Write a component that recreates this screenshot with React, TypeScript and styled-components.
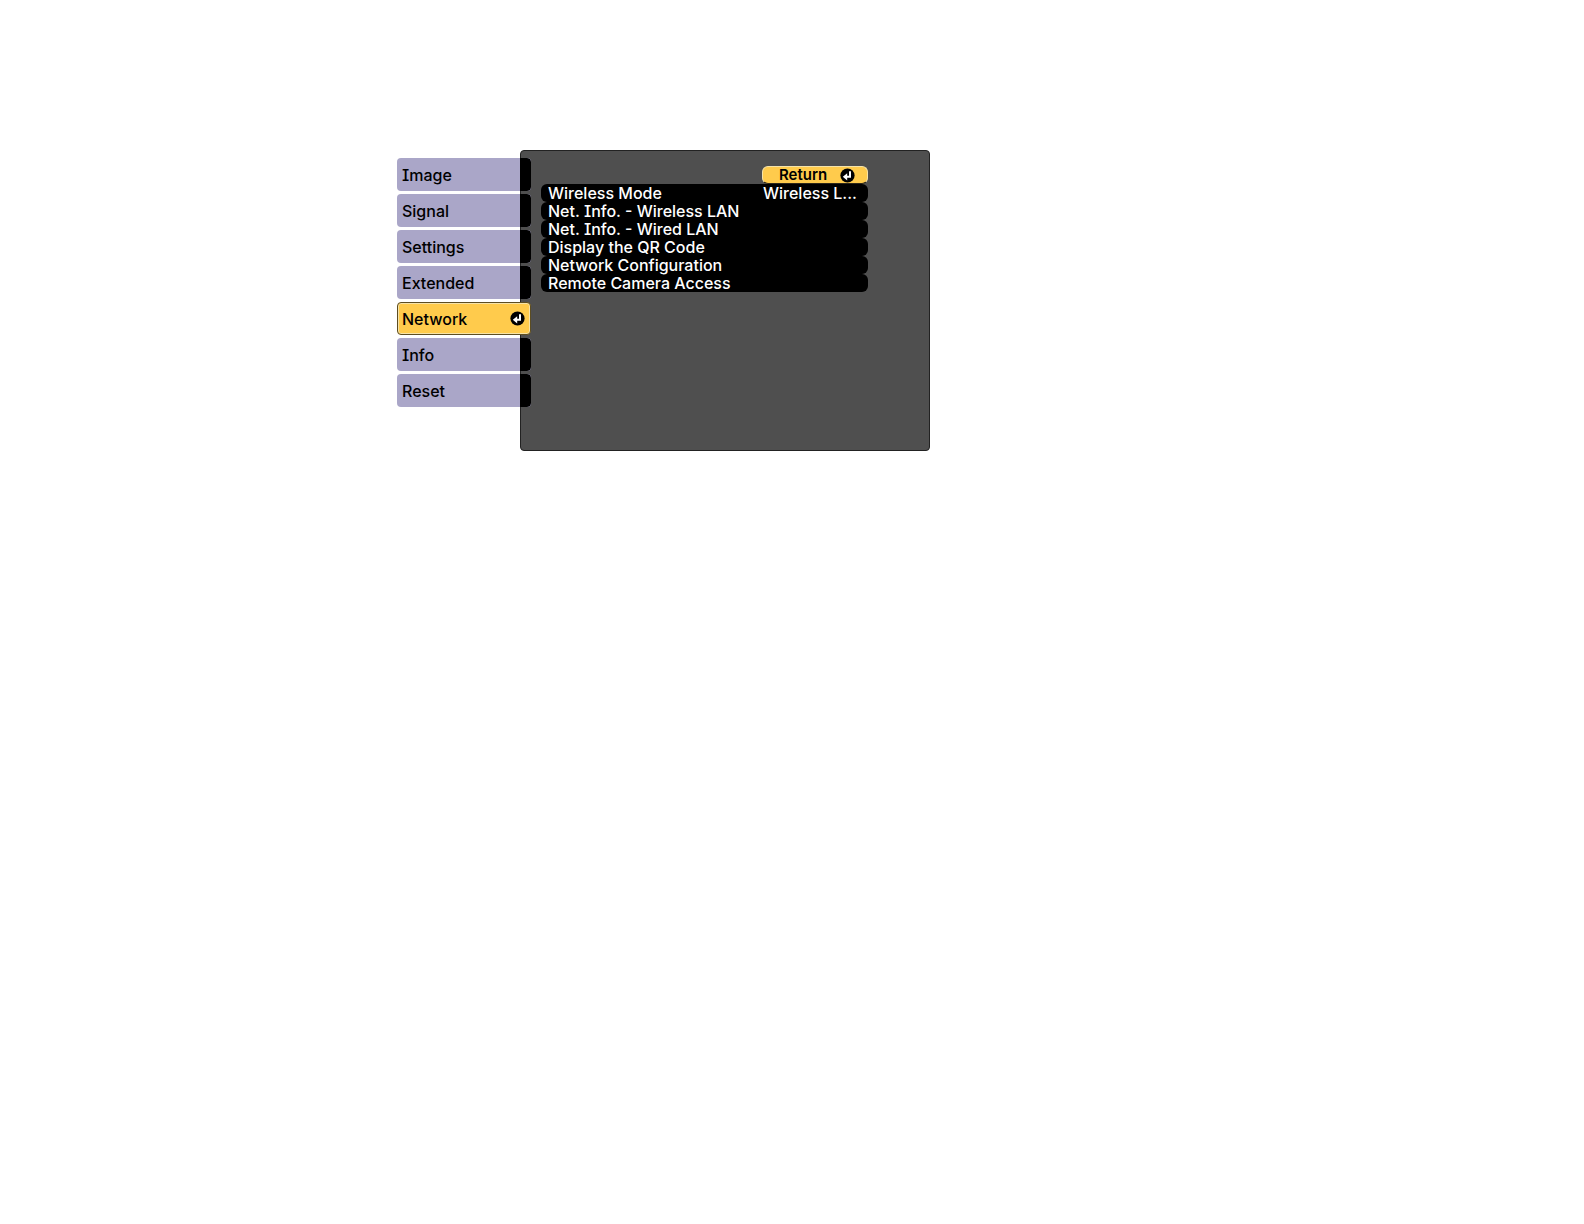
import React, { useState } from "react";
import styled, { createGlobalStyle, css } from "styled-components";

const color = {
  tab: "#aaa6c8",
  accent: "#ffcb4c",
  highlight: "#f6e3a8",
  panel: "#4f4f4f",
  ink: "#000000",
  text: "#ffffff",
};

const GlobalStyle = createGlobalStyle`
  * { box-sizing: border-box; }
  body {
    margin: 0;
    background: #ffffff;
    font-family: Inter, "Liberation Sans", sans-serif;
    font-feature-settings: "cv08";
  }
  button {
    margin: 0;
    padding: 0;
    border: 0;
    background: none;
    font: inherit;
    font-feature-settings: inherit;
    color: inherit;
    text-align: left;
    cursor: pointer;
  }
`;

const Page = styled.main`
  padding: 150px 24px 24px 397px;
`;

const Osd = styled.div`
  display: flex;
  align-items: stretch;
  max-width: 533px;
`;

const Tabs = styled.nav`
  position: relative;
  z-index: 1;
  flex: none;
  display: flex;
  flex-direction: column;
  gap: 3px;
  width: 134px;
  margin-right: -11px;
  padding: 8px 0 44px;
`;

const Tab = styled.button<{ $active: boolean }>`
  display: flex;
  align-items: center;
  justify-content: space-between;
  height: 33px;
  padding-left: 5px;
  border-radius: 4px;
  overflow: hidden;
  background: ${color.tab};
  color: ${color.ink};
  font-size: 16px;
  font-weight: 500;
  line-height: 18px;
  ${(p) =>
    p.$active &&
    css`
      padding: 0 5px 0 4px;
      border: 1px solid #5c4d22;
      box-shadow: inset 0 0 0 1px ${color.highlight};
      background: ${color.accent};
    `}
`;

const TabCap = styled.span`
  align-self: stretch;
  width: 11px;
  border-radius: 0 4px 4px 0;
  background: ${color.ink};
`;

const Panel = styled.section`
  flex: 1;
  display: flex;
  flex-direction: column;
  padding: 15px 61px 15px 20px;
  border: 1px solid #222222;
  border-radius: 4px;
  background: ${color.panel};
`;

const ReturnButton = styled.button`
  align-self: flex-end;
  display: flex;
  align-items: center;
  justify-content: space-between;
  width: 106px;
  height: 18px;
  padding: 0 12px 0 16px;
  border: 1px solid ${color.highlight};
  border-bottom-color: #2c2618;
  border-radius: 6px;
  background: ${color.accent};
  color: ${color.ink};
  font-size: 15px;
  font-weight: 600;
  line-height: 16px;
`;

const MenuList = styled.ul`
  margin: 0;
  padding: 0;
  list-style: none;
`;

const MenuItem = styled.button`
  display: flex;
  width: 100%;
  height: 18px;
  padding-left: 7px;
  border-radius: 6px;
  background: ${color.ink};
  color: ${color.text};
  font-size: 16px;
  font-weight: 500;
  line-height: 18px;
  white-space: nowrap;
`;

const ItemName = styled.span`
  flex: 1;
`;

const ItemValue = styled.span`
  width: 105px;
`;

const EnterSvg = styled.svg`
  flex: none;
  width: 15px;
  height: 15px;
`;

function EnterIcon() {
  return (
    <EnterSvg viewBox="0 0 15 15" aria-hidden="true">
      <circle cx="7.5" cy="7.5" r="7.1" fill="#000" />
      <path d="M10 3.2V8.8H6" fill="none" stroke="#fff" strokeWidth="2" />
      <path d="M2.8 8.8L7.2 5.2V12.4Z" fill="#fff" />
    </EnterSvg>
  );
}

const tabs = ["Image", "Signal", "Settings", "Extended", "Network", "Info", "Reset"];

const items: { name: string; value?: string }[] = [
  { name: "Wireless Mode", value: "Wireless L..." },
  { name: "Net. Info. - Wireless LAN" },
  { name: "Net. Info. - Wired LAN" },
  { name: "Display the QR Code" },
  { name: "Network Configuration" },
  { name: "Remote Camera Access" },
];

export default function App() {
  const [active, setActive] = useState("Network");
  return (
    <>
      <GlobalStyle />
      <Page>
        <Osd>
          <Tabs>
            {tabs.map((name) => (
              <Tab key={name} $active={name === active} onClick={() => setActive(name)}>
                {name}
                {name === active ? <EnterIcon /> : <TabCap />}
              </Tab>
            ))}
          </Tabs>
          <Panel>
            <ReturnButton>
              Return
              <EnterIcon />
            </ReturnButton>
            <MenuList>
              {items.map((item) => (
                <li key={item.name}>
                  <MenuItem>
                    <ItemName>{item.name}</ItemName>
                    {item.value && <ItemValue>{item.value}</ItemValue>}
                  </MenuItem>
                </li>
              ))}
            </MenuList>
          </Panel>
        </Osd>
      </Page>
    </>
  );
}
